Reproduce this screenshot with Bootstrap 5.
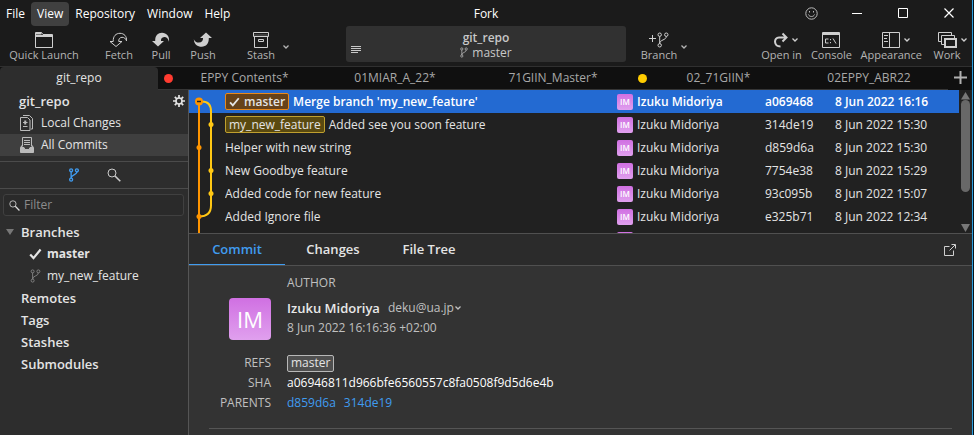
<!DOCTYPE html>
<html lang="en">
<head>
<meta charset="utf-8">
<meta name="viewport" content="width=device-width, initial-scale=1">
<title>Fork</title>
<link href="https://cdn.jsdelivr.net/npm/bootstrap@5.3.0/dist/css/bootstrap.min.css" rel="stylesheet">
<style>
  body { font-family: "Open Sans", "Noto Sans", sans-serif; font-size: 12px; line-height: 16px; color: #e4e4e4; background: #04141c; padding-right: 1px; }
  button { font: inherit; color: inherit; background: none; border: 0; padding: 0; }
  svg { display: block; fill: none; }
  svg:not([stroke]) { stroke: currentColor; }
  a { color: #409cf0; text-decoration: none; }
  .fw-semi { font-weight: 600; }
  .app-window { background: #1b1b1b; border-right: 1px solid #2d9fe0; }
  .split-bar { display: grid; grid-template-columns: 1fr 280px 1fr; }
  .title-bar { height: 28px; }
  .menu-item { height: 24px; border-radius: 4px; padding: 0 6px; color: #fff; }
  .menu-item.open { background: #404040; }
  .win-btn { width: 46px; height: 26px; color: #fff; }
  .tool-bar { height: 38px; color: #b4b4b4; }
  .tool-btn { display: grid; grid-template-rows: 16px 14px; line-height: 14px; min-width: 42px; text-align: center; justify-content: center; font-size: 11px; white-space: nowrap; }
  .tool-btn.launch { width: 76px; margin: 0 16px 0 6px; }
  .tool-icon { display: grid; grid-template-columns: 1fr auto 1fr; color: #cfcfcf; align-items: center; }
  .tool-icon > svg:first-child { grid-column: 2; }
  .tool-icon .chev { margin-left: 3px; }
  .repo-box { background: #313131; border-radius: 3px; height: 36px; margin-top: -2px; color: #c8c8c8; padding: 0 5px; line-height: 15px; display: grid; grid-template-columns: 1fr auto 1fr; }
  .tab-strip { background: #101010; border-top: 1px solid #303030; height: 24px; color: #a8a8a8; padding-right: 24px; position: relative; }
  .repo-tab { flex: 1 1 0; border-bottom: 1px solid #363636; padding: 0 6px; }
  .repo-tab.current { background: #2d2d2d; color: #e4e4e4; border-color: #2d2d2d; border-radius: 4px 4px 0 0; }
  .dot { width: 9px; height: 9px; border-radius: 50%; background: #ff3b30; margin-right: 6px; }
  .dot.dirty { background: #ffcc00; }
  .add-tab { position: absolute; right: 5px; top: 4px; color: #b0b0b0; }
  .side-bar { width: 189px; background: #2d2d2d; border-right: 1px solid #555; }
  .side-row { height: 22px; width: 100%; text-align: left; }
  .side-row.current { background: #3f3f3f; }
  .repo-row { padding: 0 3px 0 19px; font-size: 13px; }
  .nav-row { padding-left: 20px; gap: 7px; }
  .group-row { padding-left: 21px; font-size: 13px; }
  .group-row.expanded { padding-left: 6px; gap: 7px; }
  .ref-row { padding-left: 29px; gap: 5px; }
  .side-modes { height: 28px; border: solid #4b4b4b; border-width: 1px 0; margin-top: 5px; gap: 27px; }
  .filter-box { margin: 5px 4px 5px 3px; height: 22px; border: 1px solid #404040; border-radius: 3px; background: #2a2a2a; padding-left: 5px; }
  .filter-box input { background: none; border: 0; outline: 0; color: #e4e4e4; min-width: 0; padding: 0; }
  .filter-box input::placeholder { color: #8c8c8c; opacity: 1; }
  .commit-pane { flex: 0 0 143px; overflow: hidden; background: #212121; position: relative; }
  .commit-pane table { table-layout: fixed; width: 100%; border-collapse: collapse; }
  .commit-pane td { padding: 0; height: 23px; white-space: nowrap; overflow: hidden; }
  .commit-pane tr.selected { background: #236ad2; color: #fff; font-weight: 600; }
  .graph { position: absolute; left: 0; top: 0; }
  .ref-tag { display: inline-flex; align-items: center; height: 17px; border-radius: 2px; border: 1px solid #bfa02f; background: #5a4a10; color: #e4e4e4; padding: 0 3px; font-weight: 400; }
  .ref-tag.head { border-color: #e8891c; background: #66421a; font-weight: 600; }
  .ref-tag.plain { border-color: #b8b8b8; background: #4f4f4f; }
  .av { background: linear-gradient(#d070e2, #e0a0ee); color: #fff; border-radius: 2px; width: 16px; height: 16px; font-size: 8px; font-weight: 600; display: flex; align-items: center; justify-content: center; flex: none; }
  .av.big { width: 42px; height: 42px; border-radius: 4px; font-size: 22px; font-weight: 400; }
  .scroll-col { width: 13px; background: #212121; padding: 2px 0 1px; }
  .scroll-thumb { width: 9px; height: 92px; border-radius: 5px; background: #686868; }
  .detail-tabs { height: 33px; background: #2b2b2b; border: solid #505050; border-width: 1px 0; }
  .detail-tab { width: 96px; font-size: 13px; font-weight: 600; border-bottom: 1px solid transparent; }
  .detail-tab.current { color: #409cf0; border-color: #409cf0; }
  .details { background: #333; padding: 7px 20px 0; color: #c0c0c0; overflow: hidden; }
  .detail-grid { display: grid; grid-template-columns: 62px 1fr; column-gap: 16px; line-height: 20px; }
  .author-cell { padding-top: 5px; }
  .author-name { font-size: 13px; color: #e8e8e8; }
  .meta-grid { margin-top: 13px; }
  .rule { border-top: 1px solid #555; margin-top: 15px; }
</style>
</head>
<body>
<svg width="0" height="0" class="position-absolute" aria-hidden="true" stroke="inherit">
  <symbol id="branch" viewBox="0 0 12 16"><circle cx="2.7" cy="2.7" r="1.7"/><circle cx="9.3" cy="2.7" r="1.7"/><circle cx="2.7" cy="13.3" r="1.7"/><path d="M2.7 4.4v7.2M9.3 4.4c0 4-6.6 3-6.6 7.2"/></symbol>
  <symbol id="chev" viewBox="0 0 8 6"><path d="M1.5 1.5 4 4l2.5-2.5" stroke-width="1.3"/></symbol>
  <symbol id="lens" viewBox="0 0 14 14"><circle cx="5" cy="5" r="4"/><path d="m8 8 5.3 5.3" stroke-width="1.6"/></symbol>
  <symbol id="tick" viewBox="0 0 13 12"><path d="m1.2 6.5 3.3 3.6L11.6 1.5" stroke-width="2.2"/></symbol>
</svg>
<div class="app-window vh-100 d-flex flex-column overflow-hidden">
  <header class="title-bar split-bar">
    <nav class="d-flex align-items-center" aria-label="Menu">
      <button class="menu-item">File</button>
      <button class="menu-item open">View</button>
      <button class="menu-item">Repository</button>
      <button class="menu-item">Window</button>
      <button class="menu-item">Help</button>
    </nav>
    <div class="d-flex align-items-center justify-content-center text-white">Fork</div>
    <div class="d-flex justify-content-end">
      <button class="win-btn d-flex align-items-center justify-content-center" aria-label="Feedback"><svg width="13" height="13" viewBox="0 0 13 13" stroke="#bbb"><circle cx="6.500" cy="6.500" r="5.700"/><path d="M3.500 7.500c.8 2.700 5.200 2.700 6 0M4.500 4v1.500M8.500 4v1.500"/></svg></button>
      <button class="win-btn d-flex align-items-center justify-content-center" aria-label="Minimize"><svg width="10" height="10"><path d="M0 5.500h10"/></svg></button>
      <button class="win-btn d-flex align-items-center justify-content-center" aria-label="Maximize"><svg width="10" height="10"><path d="M.5.5h9v9h-9z"/></svg></button>
      <button class="win-btn d-flex align-items-center justify-content-center" aria-label="Close"><svg width="10" height="10"><path d="m.5.500 9 9m0-9-9 9" stroke-width="1.200"/></svg></button>
    </div>
  </header>

  <div class="tool-bar split-bar">
    <div class="d-flex pt-1 align-items-start">
      <button class="tool-btn launch"><span class="tool-icon"><svg width="18" height="16"><path d="M.5 15.500V.5h6l1.500 2h9.500v13z"/><path d="M1 1.500h5.500M1 4h16.500" stroke-width="2"/></svg></span>Quick Launch</button>
      <button class="tool-btn"><span class="tool-icon"><svg width="20" height="16"><path d="M1 9.500h3.200C4 4 7 1.300 11 1.300c4 0 7 3 6.500 7.500-1-2.500-2.500-3.600-4.500-3.500-2.500.2-3.500 2-3.200 4.200H13l-6 5z"/></svg></span>Fetch</button>
      <button class="tool-btn"><span class="tool-icon"><svg width="20" height="16"><path fill="currentColor" stroke="none" d="M1 9h3.200C4 3.500 7 .8 11 .8c4.500 0 7.800 3.500 7 9-1-3.500-2.800-4.800-4.700-4.700-2.500.2-3.500 1.700-3.300 3.900H13l-6 5.500z"/></svg></span>Pull</button>
      <button class="tool-btn me-3"><span class="tool-icon"><svg width="20" height="16"><path fill="currentColor" stroke="none" d="M19 6h-3.200c.2 5.500-2.800 8.700-7 8.700-4.500 0-7.500-2-8-7.500 1 2.500 3 3.500 5 3.400 3-.2 4.400-2 4.200-4.600H7L13 .5z"/></svg></span>Push</button>
      <button class="tool-btn"><span class="tool-icon"><svg width="16" height="16"><path d="M.5.500h15v4H.5zM1.500 4.500h13v11h-13zM5.500 7.500h5v2h-5z"/><path d="M1 3h14" stroke-opacity=".4"/></svg></span>Stash</button>
      <button class="mt-2" aria-label="Stash options"><svg class="mt-1" width="8" height="6"><use href="#chev"/></svg></button>
    </div>
    <div class="repo-box">
      <svg class="align-self-end mb-2" width="10" height="8"><path d="M0 .5h10M0 2.500h10M0 4.500h10M0 6.500h7"/></svg>
      <div class="text-center pt-1"><div class="fw-semi">git_repo</div><div class="d-flex align-items-center justify-content-center gap-1"><svg width="8" height="11"><use href="#branch"/></svg>master</div></div>
    </div>
    <div class="d-flex pt-1 ps-1 align-items-start">
      <button class="tool-btn ms-2"><span class="tool-icon"><svg width="20" height="16"><path d="M0 6.500h7M3.500 3v7"/><use href="#branch" x="8" width="12" height="16"/></svg></span>Branch</button>
      <button class="mt-2" aria-label="Branch options"><svg class="mt-1" width="8" height="6"><use href="#chev"/></svg></button>
      <div class="d-flex ms-auto pe-1">
        <button class="tool-btn"><span class="tool-icon"><svg width="14" height="16"><path d="M6.500 14.500C-.5 14.500-.5 5.500 5 5.500h7M8.500 1.500l4 4-4 4" stroke-width="2"/></svg><svg class="chev" width="8" height="6"><use href="#chev"/></svg></span>Open in</button>
        <button class="tool-btn ms-2"><span class="tool-icon"><svg width="18" height="16"><path d="M.5.500h17v15H.5z"/><path d="M1 2h16" stroke-width="2"/><path d="M6.500 7h-3v4h3M8.500 7v1.200M8.500 10v1.200M11 6.500l3 5"/></svg></span>Console</button>
        <button class="tool-btn ms-2"><span class="tool-icon"><svg width="18" height="16"><path d="M.5.500h17v15H.5zM7.500.500v15M2 3.500h4M2 6.500h3M2 9.500h4"/></svg><svg class="chev" width="8" height="6"><use href="#chev"/></svg></span>Appearance</button>
        <button class="tool-btn ms-1"><span class="tool-icon"><svg width="19" height="16"><path d="M3 9.500H.5v-9h13V3M6 12.500H3.500v-9h13V6"/><path d="M7 7h11v8H7z" stroke-width="2"/></svg><svg class="chev" width="8" height="6"><use href="#chev"/></svg></span>Work</button>
      </div>
    </div>
  </div>

  <div class="tab-strip d-flex">
    <button class="repo-tab current">git_repo</button>
    <button class="repo-tab d-flex align-items-center"><span class="dot"></span><span class="flex-fill">EPPY Contents*</span></button>
    <button class="repo-tab">01MIAR_A_22*</button>
    <button class="repo-tab">71GIIN_Master*</button>
    <button class="repo-tab d-flex align-items-center"><span class="dot dirty"></span><span class="flex-fill">02_71GIIN*</span></button>
    <button class="repo-tab">02EPPY_ABR22</button>
    <button class="add-tab" aria-label="New tab"><svg width="13" height="13"><path d="M0 6.500h13M6.500 0v13" stroke-width="2"/></svg></button>
  </div>

  <div class="d-flex flex-fill overflow-hidden">
    <aside class="side-bar flex-shrink-0">
      <div class="side-row repo-row d-flex align-items-center justify-content-between fw-semi">git_repo
        <button aria-label="Repository settings"><svg width="12" height="12" viewBox="0 0 12 12"><circle cx="6" cy="6" r="3" stroke-width="1.600"/><path d="M6 0v3M6 9v3M0 6h3M9 6h3M1.800 1.800l2 2M8.200 8.200l2 2M10.200 1.800l-2 2M3.800 8.200l-2 2" stroke-width="1.700"/></svg></button></div>
      <button class="side-row nav-row d-flex align-items-center"><svg width="14" height="16" stroke="#bbb"><path d="M3 .5h6.500l3 3v10.500H11"/><path d="M.5 2.500h7l2.500 2.500v10.500H.5zM3 11.500h4.500M3 7.500h4.500"/><path d="M5.250 5.500v4" stroke-width="2"/></svg>Local Changes</button>
      <button class="side-row nav-row current d-flex align-items-center"><svg width="14" height="16" stroke="#bbb"><path d="M2.500 9V.500h9V9M4 3.500h6M4 5.500h6M4 7.500h6"/><path fill="#bbb" d="M.5 15.500v-5L2 8.500v2h2l1 2h4l1-2h2v-2l1.500 2v5z"/></svg>All Commits</button>
      <div class="side-modes d-flex align-items-center justify-content-center">
        <button aria-label="Branches"><svg width="12" height="14" stroke="#409cf0" stroke-width="1.500"><use href="#branch"/></svg></button>
        <button aria-label="Search"><svg width="14" height="14" stroke="#ccc"><use href="#lens"/></svg></button>
      </div>
      <label class="filter-box d-flex align-items-center"><svg width="11" height="11" stroke="#ddd"><use href="#lens"/></svg><input class="flex-fill ms-1" placeholder="Filter" aria-label="Filter"></label>
      <button class="side-row group-row expanded fw-semi d-flex align-items-center"><svg width="8" height="6"><path d="M0 0h8L4 6z" fill="#777" stroke="none"/></svg>Branches</button>
      <button class="side-row ref-row fw-bold d-flex align-items-center"><svg width="13" height="12"><use href="#tick"/></svg>master</button>
      <button class="side-row ref-row d-flex align-items-center"><svg width="13" height="14" stroke="#888"><use href="#branch"/></svg>my_new_feature</button>
      <button class="side-row group-row fw-semi">Remotes</button>
      <button class="side-row group-row fw-semi">Tags</button>
      <button class="side-row group-row fw-semi">Stashes</button>
      <button class="side-row group-row fw-semi">Submodules</button>
    </aside>

    <main class="flex-fill d-flex flex-column overflow-hidden">
      <section class="commit-pane d-flex">
        <div class="flex-fill position-relative">
          <table>
            <colgroup><col style="width:36px"><col><col style="width:148px"><col style="width:70px"><col style="width:124px"></colgroup>
            <tbody>
              <tr class="selected"><td></td><td><div class="d-flex align-items-center gap-1"><span class="ref-tag head gap-1"><svg width="11" height="10"><use href="#tick"/></svg>master</span>Merge branch 'my_new_feature'</div></td><td><div class="d-flex align-items-center gap-1"><span class="av">IM</span>Izuku Midoriya</div></td><td>a069468</td><td>8 Jun 2022 16:16</td></tr>
              <tr><td></td><td><div class="d-flex align-items-center gap-1"><span class="ref-tag">my_new_feature</span>Added see you soon feature</div></td><td><div class="d-flex align-items-center gap-1"><span class="av">IM</span>Izuku Midoriya</div></td><td>314de19</td><td>8 Jun 2022 15:30</td></tr>
              <tr><td></td><td>Helper with new string</td><td><div class="d-flex align-items-center gap-1"><span class="av">IM</span>Izuku Midoriya</div></td><td>d859d6a</td><td>8 Jun 2022 15:30</td></tr>
              <tr><td></td><td>New Goodbye feature</td><td><div class="d-flex align-items-center gap-1"><span class="av">IM</span>Izuku Midoriya</div></td><td>7754e38</td><td>8 Jun 2022 15:29</td></tr>
              <tr><td></td><td>Added code for new feature</td><td><div class="d-flex align-items-center gap-1"><span class="av">IM</span>Izuku Midoriya</div></td><td>93c095b</td><td>8 Jun 2022 15:07</td></tr>
              <tr><td></td><td>Added Ignore file</td><td><div class="d-flex align-items-center gap-1"><span class="av">IM</span>Izuku Midoriya</div></td><td>e325b71</td><td>8 Jun 2022 12:34</td></tr>
              <tr><td></td><td></td><td><span class="av"></span></td><td></td><td></td></tr>
            </tbody>
          </table>
          <svg class="graph" width="36" height="143" aria-hidden="true">
            <path d="M10 11.500h3c6 0 9 4 9 10v94c0 7-3 11-12 11" stroke="#ffc814" stroke-width="2"/>
            <path d="M10 11.500V143" stroke="#ff9500" stroke-width="2"/>
            <g stroke="none" fill="#ffc814"><circle cx="22" cy="34.500" r="2.500"/><circle cx="22" cy="80.500" r="2.500"/><circle cx="22" cy="103.500" r="2.500"/></g>
            <g stroke="none" fill="#ff9500"><circle cx="10" cy="11.500" r="4"/><circle cx="10" cy="57.500" r="2.500"/><circle cx="10" cy="126.500" r="2.500"/></g>
            <path d="M8 11.500h4" stroke="#222" stroke-width="1.500"/>
          </svg>
        </div>
        <div class="scroll-col d-flex flex-column align-items-center flex-shrink-0">
          <svg width="9" height="8"><path d="M4.500 0 9 7.500H0z" fill="#787878" stroke="none"/></svg>
          <div class="scroll-thumb"></div>
          <svg class="mt-auto" width="9" height="8"><path d="M4.500 8 9 0H0z" fill="#787878" stroke="none"/></svg>
        </div>
      </section>

      <div class="detail-tabs d-flex flex-shrink-0">
        <button class="detail-tab current">Commit</button>
        <button class="detail-tab">Changes</button>
        <button class="detail-tab">File Tree</button>
        <button class="ms-auto me-3" aria-label="Open in new window"><svg width="12" height="12" stroke="#d0d0d0"><path d="M5.500 2.500h-5v9h9v-5M5.500 6.500l5.500-5.500M7.500.500h4v4"/></svg></button>
      </div>

      <section class="details flex-fill">
        <div class="detail-grid">
          <span></span><span>AUTHOR</span>
          <div class="author-cell d-flex justify-content-end"><span class="av big">IM</span></div>
          <div class="author-cell"><div class="d-flex align-items-center"><span class="author-name fw-semi me-2">Izuku Midoriya</span>deku@ua.jp<button aria-label="Email options"><svg width="8" height="6"><use href="#chev"/></svg></button></div><div>8 Jun 2022 16:16:36 +02:00</div></div>
        </div>
        <div class="detail-grid meta-grid">
          <span class="text-end">REFS</span><div class="d-flex align-items-center"><span class="ref-tag plain">master</span></div>
          <span class="text-end">SHA</span><span class="text-white">a06946811d966bfe6560557c8fa0508f9d5d6e4b</span>
          <span class="text-end">PARENTS</span><span class="d-flex gap-2"><a href="#d859d6a">d859d6a</a><a href="#314de19">314de19</a></span>
        </div>
        <div class="rule"></div>
      </section>
    </main>
  </div>
</div>
<script src="https://cdn.jsdelivr.net/npm/bootstrap@5.3.0/dist/js/bootstrap.bundle.min.js"></script>
</body>
</html>
